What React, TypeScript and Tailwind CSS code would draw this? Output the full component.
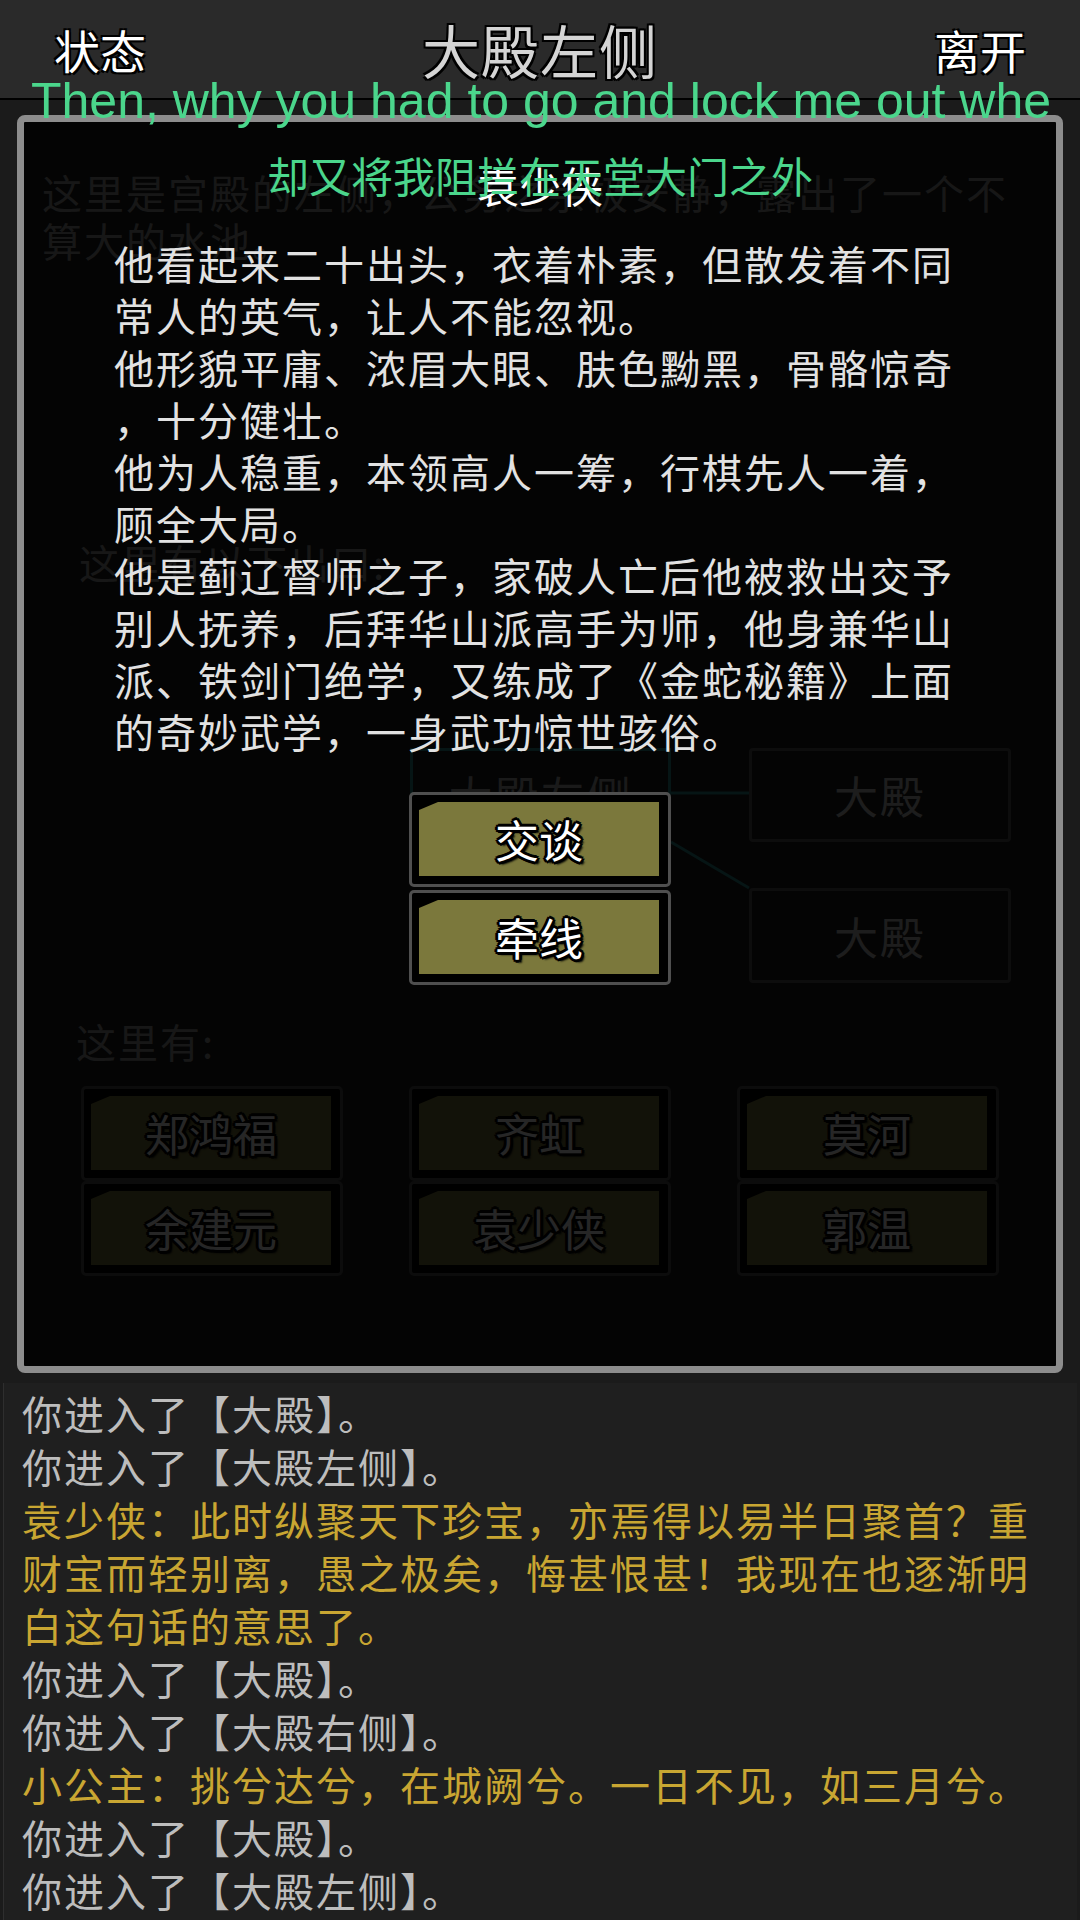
import React from 'react';

type LogLine = { text: string; say?: boolean };

const descLines = [
  '他看起来二十出头，衣着朴素，但散发着不同',
  '常人的英气，让人不能忽视。',
  '他形貌平庸、浓眉大眼、肤色黝黑，骨骼惊奇',
  '，十分健壮。',
  '他为人稳重，本领高人一筹，行棋先人一着，',
  '顾全大局。',
  '他是蓟辽督师之子，家破人亡后他被救出交予',
  '别人抚养，后拜华山派高手为师，他身兼华山',
  '派、铁剑门绝学，又练成了《金蛇秘籍》上面',
  '的奇妙武学，一身武功惊世骇俗。',
];

const logs: LogLine[] = [
  { text: '你进入了【大殿】。' },
  { text: '你进入了【大殿左侧】。' },
  { text: '袁少侠：此时纵聚天下珍宝，亦焉得以易半日聚首？重财宝而轻别离，愚之极矣，悔甚恨甚！我现在也逐渐明白这句话的意思了。', say: true },
  { text: '你进入了【大殿】。' },
  { text: '你进入了【大殿右侧】。' },
  { text: '小公主：挑兮达兮，在城阙兮。一日不见，如三月兮。', say: true },
  { text: '你进入了【大殿】。' },
  { text: '你进入了【大殿左侧】。' },
];

const npcs = ['郑鸿福', '齐虹', '莫河', '余建元', '袁少侠', '郭温'];

function FrameButton({ label }: { label: string }) {
  return (
    <div className="h-[95px] w-[262px] rounded-[5px] border-[3px] border-[#4f4f4f] bg-black pt-[7px] pl-[7px] pr-[9px] pb-[8px]">
      <div className="flex h-full items-center justify-center bg-[#7b783c] text-[44px] leading-none text-white [clip-path:polygon(0_8px,19px_0,100%_0,100%_100%,0_100%)] [text-shadow:-2px_-2px_0_#000,2px_-2px_0_#000,-2px_2px_0_#000,2px_2px_0_#000,0_-3px_0_#000,0_3px_0_#000,-3px_0_0_#000,3px_0_0_#000,3px_3px_2px_#000]">
        {label}
      </div>
    </div>
  );
}

export default function App() {
  return (
    <div className="relative h-[1920px] w-[1080px] overflow-hidden bg-[#1b1b1b] [font-family:'Noto_Sans_CJK_SC',sans-serif]">
      {/* Header */}
      <header className="flex h-[100px] items-center justify-between border-b-2 border-black bg-[#2a2a2a] px-[54px]">
        <span className="text-[46px] leading-none text-white [text-shadow:-2px_-2px_0_#000,2px_-2px_0_#000,-2px_2px_0_#000,2px_2px_0_#000]">
          状态
        </span>
        <span className="text-[58px] leading-none tracking-[1px] text-[#d4d4d4] [text-shadow:-2px_-2px_0_#000,2px_-2px_0_#000,-2px_2px_0_#000,2px_2px_0_#000,0_2px_0_#000,0_-2px_0_#000]">
          大殿左侧
        </span>
        <span className="text-[46px] leading-none text-white [text-shadow:-2px_-2px_0_#000,2px_-2px_0_#000,-2px_2px_0_#000,2px_2px_0_#000]">
          离开
        </span>
      </header>

      {/* Room */}
      <main className="flow-root h-[1283px] text-[40px] tracking-[2px]">
        <p className="mt-[68px] px-[42px] leading-[48px] text-[#9a9a9a]">
          这里是宫殿的左侧，公务之余极安静，露出了一个不算大的水池。
        </p>
        <p className="mt-[274px] pl-[79px] leading-[48px] text-[#9a9a9a]">这里有以下出口:</p>

        <div className="relative mt-[162px] h-[235px]">
          <svg className="absolute inset-0" width="1080" height="235">
            <line x1="671" y1="45" x2="749" y2="45" stroke="#2a8a8a" strokeWidth="3" />
            <line x1="671" y1="94" x2="749" y2="140" stroke="#2a8a8a" strokeWidth="3" />
          </svg>
          <div className="absolute left-[410px] top-0 flex h-[94px] w-[261px] items-center justify-center border-[3px] border-[#2a8a8a] text-[44px] text-[#b0b0b0]">
            大殿左侧
          </div>
          <div className="absolute left-[749px] top-0 flex h-[94px] w-[262px] items-center justify-center rounded-[4px] border-[3px] border-[#5a5a5a] text-[44px] text-[#c0c0c0]">
            大殿
          </div>
          <div className="absolute left-[749px] top-[140px] flex h-[95px] w-[262px] items-center justify-center rounded-[4px] border-[3px] border-[#5a5a5a] text-[44px] text-[#c0c0c0]">
            大殿
          </div>
        </div>

        <p className="mt-[34px] pl-[76px] leading-[48px] text-[#9a9a9a]">这里有:</p>
        <div className="ml-[81px] mt-[21px] grid w-[918px] grid-cols-3 gap-x-[66px] tracking-normal">
          {npcs.map((n) => (
            <FrameButton key={n} label={n} />
          ))}
        </div>
      </main>

      {/* Message log */}
      <section className="mx-[3px] h-[537px] border-l border-[#2e2e2e] bg-[#1f1f1f] px-[18px] pt-[4px]">
        <div className="w-[1012px] text-[40px] leading-[53px] tracking-[2px]">
          {logs.map((l, i) => (
            <p key={i} className={l.say ? 'text-[#c9a632]' : 'text-[#bdbdbd]'}>
              {l.text}
            </p>
          ))}
        </div>
      </section>

      {/* NPC dialog */}
      <div className="absolute left-[17px] top-[115px] flex h-[1258px] w-[1046px] flex-col items-center rounded-[8px] border-[7px] border-[#8d8d8d] bg-black/85 pt-[37px]">
        <h2 className="text-[42px] leading-[52px] text-white">袁少侠</h2>
        <div className="mt-[26px] w-full pl-[90px] text-[40px] leading-[52px] tracking-[2px] text-[#e2e2e2]">
          {descLines.map((l, i) => (
            <div key={i} className="whitespace-nowrap">
              {l}
            </div>
          ))}
        </div>
        <div className="mt-[35px] flex flex-col gap-[3px]">
          <FrameButton label="交谈" />
          <FrameButton label="牵线" />
        </div>
      </div>

      {/* Subtitles */}
      <div className="absolute left-[31px] top-[76px] whitespace-nowrap text-[50px] leading-[50px] text-[#4bd68c] [font-family:'Liberation_Sans',Arial,sans-serif]">
        Then, why you had to go and lock me out whe
      </div>
      <div className="absolute left-0 top-[154px] w-full text-center text-[42px] leading-[42px] text-[#4bd68c]">
        却又将我阻拦在天堂大门之外
      </div>
    </div>
  );
}
